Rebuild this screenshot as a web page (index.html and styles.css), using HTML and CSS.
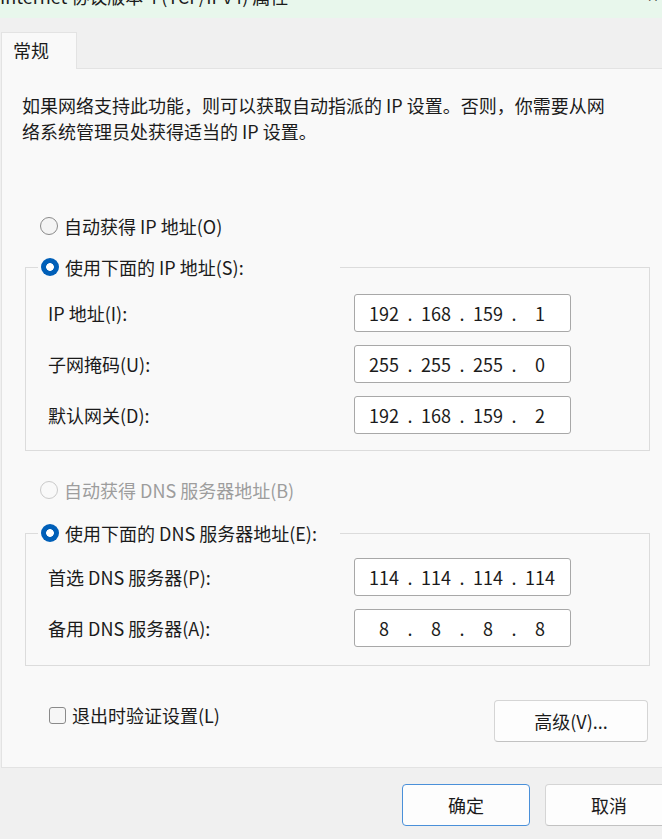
FILE: index.html
```html
<!DOCTYPE html>
<html lang="zh-CN">
<head>
  <meta charset="UTF-8">
  <meta name="viewport" content="width=device-width, initial-scale=1.0">
  <title>Internet 协议版本 4 (TCP/IPv4) 属性</title>
  <link rel="stylesheet" href="styles.css">
</head>
<body>
  <div class="dialog">
    <div class="titlebar">
      <span class="title">Internet 协议版本 4 (TCP/IPv4) 属性</span>
      <span class="close">✕</span>
    </div>

    <div class="tabstrip">
      <div class="tab">常规</div>
      <div class="tab-rest"></div>
    </div>

    <div class="panel">
      <p class="intro">如果网络支持此功能，则可以获取自动指派的 IP 设置。否则，你需要从网<br>络系统管理员处获得适当的 IP 设置。</p>

      <div class="radio-line first">
        <span class="radio"></span>
        <span>自动获得 IP 地址(O)</span>
      </div>

      <fieldset class="group ip-group">
        <legend>
          <span class="radio checked"></span>
          <span>使用下面的 IP 地址(S):</span>
        </legend>
        <div class="field">
          <label>IP 地址(I):</label>
          <div class="ip"><span class="oct">192</span><span class="dot">.</span><span class="oct">168</span><span class="dot">.</span><span class="oct">159</span><span class="dot">.</span><span class="oct">1</span></div>
        </div>
        <div class="field">
          <label>子网掩码(U):</label>
          <div class="ip"><span class="oct">255</span><span class="dot">.</span><span class="oct">255</span><span class="dot">.</span><span class="oct">255</span><span class="dot">.</span><span class="oct">0</span></div>
        </div>
        <div class="field">
          <label>默认网关(D):</label>
          <div class="ip"><span class="oct">192</span><span class="dot">.</span><span class="oct">168</span><span class="dot">.</span><span class="oct">159</span><span class="dot">.</span><span class="oct">2</span></div>
        </div>
      </fieldset>

      <div class="radio-line disabled">
        <span class="radio"></span>
        <span>自动获得 DNS 服务器地址(B)</span>
      </div>

      <fieldset class="group dns-group">
        <legend>
          <span class="radio checked"></span>
          <span>使用下面的 DNS 服务器地址(E):</span>
        </legend>
        <div class="field">
          <label>首选 DNS 服务器(P):</label>
          <div class="ip"><span class="oct">114</span><span class="dot">.</span><span class="oct">114</span><span class="dot">.</span><span class="oct">114</span><span class="dot">.</span><span class="oct">114</span></div>
        </div>
        <div class="field">
          <label>备用 DNS 服务器(A):</label>
          <div class="ip"><span class="oct">8</span><span class="dot">.</span><span class="oct">8</span><span class="dot">.</span><span class="oct">8</span><span class="dot">.</span><span class="oct">8</span></div>
        </div>
      </fieldset>

      <div class="bottom-row">
        <label class="check-line">
          <span class="checkbox"></span>
          <span>退出时验证设置(L)</span>
        </label>
        <button class="button advanced">高级(V)...</button>
      </div>
    </div>

    <div class="footer">
      <button class="button default">确定</button>
      <button class="button">取消</button>
    </div>
  </div>
</body>
</html>
```

FILE: styles.css
```css
* { box-sizing: border-box; }
body { margin: 0; width: 662px; height: 839px; overflow: hidden; background: #f0f0f0; color: #1b1b1b; font-family: "Noto Sans CJK SC", "Noto Sans", sans-serif; font-size: 18px; }
.dialog { width: 680px; margin-left: 1px; }

.titlebar { height: 18px; margin-left: -1px; background: #e8f7ec; display: flex; justify-content: space-between; overflow: hidden; }
.titlebar span { display: block; line-height: 20px; margin-top: -14px; }
.close { margin-right: 22px; font-size: 14px; }

.tabstrip { display: flex; padding-top: 14px; }
.tab { width: 76px; height: 37px; background: #f9f9f9; border: 1px solid #e3e3e3; border-bottom: none; padding-left: 11px; line-height: 34px; }
.tab-rest { flex: 1; border-bottom: 1px solid #e3e3e3; }

.panel { background: #f9f9f9; border-left: 1px solid #e3e3e3; border-bottom: 1px solid #e3e3e3; padding: 23px 0 25px 0; }
.intro { margin: 0 0 0 20px; line-height: 26px; white-space: nowrap; }

.radio-line { display: flex; align-items: center; gap: 6px; height: 26px; margin-left: 38px; }
.radio-line.first { margin-top: 69px; }
.radio-line.disabled { margin-top: 26px; color: #9d9d9d; }
.radio { width: 18px; height: 18px; border-radius: 50%; border: 1px solid #8a8a8a; background: #f4f4f4; flex: none; }
.disabled .radio { border-color: #cacaca; background: #f9f9f9; }
.radio.checked { border: none; background: radial-gradient(circle, #fff 0 3.5px, #005fb8 4.2px); }

.group { width: 625px; margin: 0 0 0 23px; border: 1px solid #dcdcdc; padding: 14px 0 16px 12px; }
.ip-group { margin-top: 15px; }
.dns-group { margin-top: 17px; padding-top: 12px; padding-bottom: 18px; }
.group legend { display: flex; align-items: center; gap: 6px; height: 26px; width: 302px; padding: 0 3px; }

.field { display: grid; grid-template-columns: 306px 217px; align-items: center; height: 38px; margin-left: 10px; }
.field + .field { margin-top: 13px; }
.ip { display: flex; align-items: center; height: 38px; padding-left: 9px; background: #fff; border: 1px solid #a8a8a8; border-radius: 3px; }
.oct { width: 40px; text-align: center; }
.dot { width: 12px; text-align: center; }

.bottom-row { display: flex; align-items: flex-start; width: 646px; margin-top: 34px; padding-left: 47px; }
.check-line { display: flex; align-items: center; gap: 6px; height: 26px; margin-top: 2px; }
.checkbox { width: 17px; height: 17px; border: 1px solid #8a8a8a; border-radius: 3px; background: #f6f6f6; }

.button { height: 42px; background: #fdfdfd; border: 1px solid #d5d5d5; border-bottom-color: #c2c2c2; border-radius: 4px; color: #1b1b1b; font-family: inherit; font-size: 18px; padding: 0; }
.advanced { width: 154px; margin-left: auto; }

.footer { display: flex; gap: 15px; padding: 16px 0 0 401px; }
.footer .button { width: 128px; }
.button.default { border: 1px solid #4a90d9; }
```
